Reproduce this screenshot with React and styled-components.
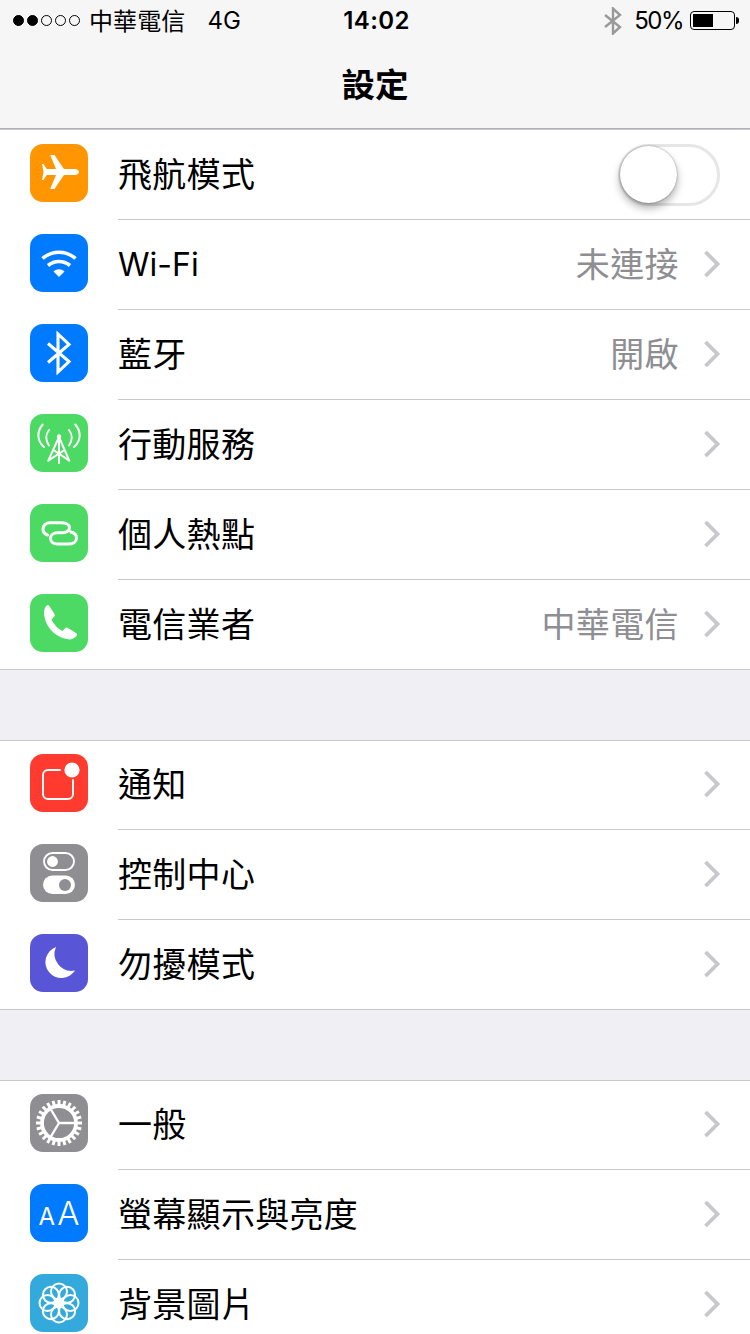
import React from "react";
import styled, { createGlobalStyle } from "styled-components";

const GlobalStyle = createGlobalStyle`
  html, body {
    margin: 0;
    height: 1334px;
    overflow: hidden;
    background: #efeff4;
  }
  body {
    font-family: Inter, "Noto Sans CJK TC", "Liberation Sans", sans-serif;
  }
`;

const Page = styled.div`
  width: 750px;
  height: 1334px;
  overflow: hidden;
  background: #efeff4;
`;

const Header = styled.header`
  height: 130px;
  box-sizing: border-box;
  background: #f6f6f7;
  border-bottom: 1px solid #c8c7cc;
  box-shadow: inset 0 -1px 0 #b2b2b8;
`;

const StatusBar = styled.div`
  height: 41px;
  padding: 0 11px 0 13px;
  display: grid;
  grid-template-columns: 1fr auto 1fr;
  align-items: center;
  color: #000;
  font-size: 24px;
`;

const StatusLeft = styled.div`
  display: flex;
  align-items: center;
`;

const Dots = styled.div`
  display: flex;
  gap: 3px;
  margin-right: 9px;
`;

const Dot = styled.span`
  width: 11px;
  height: 11px;
  box-sizing: border-box;
  border-radius: 50%;
  border: 1px solid #000;
  background: ${(p) => (p.$on ? "#000" : "transparent")};
`;

const Carrier = styled.span`
  padding-bottom: 2px;
  letter-spacing: 0.1px;
`;

const Network = styled.span`
  margin-left: 22px;
  margin-right: -2px;
`;

const Clock = styled.span`
  font-weight: 600;
  letter-spacing: 0.4px;
  margin-left: 1px;
`;

const StatusRight = styled.div`
  display: flex;
  align-items: center;
  justify-content: flex-end;
`;

const BluetoothMark = styled.svg`
  margin-right: 11px;
`;

const Percent = styled.span`
  letter-spacing: -1.5px;
`;

const Battery = styled.div`
  width: 45px;
  height: 19px;
  margin-left: 7px;
  margin-right: 4px;
  box-sizing: border-box;
  border: 1px solid #000;
  border-radius: 4px;
  padding: 2px;
  display: flex;
  position: relative;
  &::after {
    content: "";
    position: absolute;
    right: -5px;
    top: 5px;
    width: 3px;
    height: 7px;
    background: #000;
    border-radius: 0 3px 3px 0;
  }
`;

const BatteryLevel = styled.div`
  width: 50%;
  background: #000;
`;

const Title = styled.h1`
  margin: 0;
  height: 83px;
  display: flex;
  align-items: center;
  justify-content: center;
  font-size: 33.500px;
  font-weight: 600;
  color: #000;
`;

const Section = styled.section`
  background: #fff;
  margin-bottom: 70px;
  box-shadow: ${(p) => (p.$flush ? "" : "inset 0 1px 0 #c8c7cc,")} inset 0 -1px 0 #c8c7cc;
`;

const Row = styled.div`
  height: 90px;
  padding-left: 30px;
  display: flex;
  align-items: flex-start;
  gap: 30px;
`;

const IconBox = styled.div`
  flex: none;
  width: 58px;
  height: 58px;
  margin-top: 14px;
  border-radius: 13px;
  background: ${(p) => p.$color};
  display: flex;
  align-items: center;
  justify-content: center;
  color: #fff;
`;

const RowBody = styled.div`
  flex: 1;
  height: 90px;
  box-sizing: border-box;
  padding-right: 29px;
  display: flex;
  align-items: center;
  border-bottom: 1px solid ${(p) => (p.$last ? "transparent" : "#c8c7cc")};
`;

const Label = styled.span`
  flex: 1;
  font-size: ${(p) => (p.$latin ? "32px" : "34px")};
  letter-spacing: ${(p) => (p.$latin ? "0" : "0.3px")};
  padding-bottom: ${(p) => (p.$latin ? "0" : "4px")};
  color: #000;
`;

const Value = styled.span`
  font-size: 34px;
  letter-spacing: 0.4px;
  padding-bottom: 4px;
  color: #8e8e93;
  margin-right: 25px;
`;

const Track = styled.div`
  width: 102px;
  height: 62px;
  margin-right: 1px;
  box-sizing: border-box;
  border: 3px solid #e6e6e6;
  border-radius: 31px;
  display: flex;
  align-items: center;
`;

const Knob = styled.div`
  width: 57px;
  height: 57px;
  margin-left: -1px;
  border-radius: 50%;
  background: #fff;
  box-shadow: 0 5px 9px rgba(0, 0, 0, 0.32), 0 0 2px rgba(0, 0, 0, 0.4);
`;

const ChevronMark = styled.svg`
  margin-bottom: 1px;
`;

const AaGlyphs = styled.div`
  display: flex;
  align-items: baseline;
  gap: 2px;
  font-family: Inter, "Liberation Sans", sans-serif;
`;

const AaSmall = styled.span`
  font-size: 24px;
  font-weight: 400;
`;

const AaLarge = styled.span`
  font-size: 33px;
  font-weight: 300;
`;

const Svg = ({ children }) => (
  <svg width="58" height="58" viewBox="0 0 58 58" fill="none" stroke="#fff" strokeLinecap="round" strokeLinejoin="round">
    {children}
  </svg>
);

const Plane = () => (
  <Svg>
    <path
      stroke="none"
      fill="#fff"
      d="M49 28c0-1.600-2-3-4-3H34L24.500 11h-4.300l5.800 14h-9.200L13.400 20H12l1.500 8L12 36h1.400l3.400-5H26L20.200 45h4.300L34 31h11c2 0 4-1.400 4-3z"
    />
  </Svg>
);

const Wifi = () => (
  <Svg>
    <path strokeWidth="3.600" strokeLinecap="butt" d="M12.500 24.500c9.500-8.400 23.500-8.400 33 0" />
    <path strokeWidth="3.600" strokeLinecap="butt" d="M18 31.500c6.500-5.400 15.500-5.400 22 0" />
    <path stroke="none" fill="#fff" d="M23.500 37.500c3.200-3 7.800-3 11 0L29 43z" />
  </Svg>
);

const Bluetooth = () => (
  <Svg>
    <path strokeWidth="3.100" strokeLinecap="butt" strokeLinejoin="miter" d="M18 19.500 39 37.500 28 48V10l11 10.500L18 38.500" />
  </Svg>
);

const Tower = () => (
  <Svg>
    <g strokeWidth="2">
      <path d="M12.700 10.500c-6 7-6 16 1.300 22.500" />
      <path d="M45.300 10.500c6 7 6 16-1.300 22.500" />
      <path d="M19 16c-3.600 4.500-3.600 10.500 0 15.500" />
      <path d="M39 16c3.600 4.500 3.600 10.500 0 15.500" />
      <path d="M29 23v26M29 23 18.300 46.700M29 23l10.300 23.700M23.400 36 39.300 46.700M34.600 36 18.300 46.700" />
    </g>
    <circle cx="29" cy="22.500" r="2.200" fill="#fff" stroke="none" />
  </Svg>
);

const Hotspot = () => (
  <Svg>
    <path
      strokeWidth="3"
      d="M17.500 31C14.500 30 13 27.800 13 25 13 21.500 16 18.800 20 18.800H31C35.500 18.800 39.500 20.500 39.500 23.700 39.500 26.800 36 28.800 32 28.800H27.500C23.500 28.800 20.500 31 20.500 34.500 20.500 37.800 23.500 40 27.500 40H38.500C43 40 46.500 37.800 46.500 34 46.500 31 44.500 28.800 41 28"
    />
  </Svg>
);

const Phone = () => (
  <Svg>
    <path
      stroke="none"
      fill="#fff"
      d="M19 11.500l5.500 8.500c.6 1 .4 2-.4 2.800l-2.600 2.600c2 4.500 6.500 9.500 11 11.500l2.600-2.600c.8-.8 1.800-1 2.800-.4l8.500 5.400c.8.6.8 1.600.2 2.400-1.500 2-4.400 3.700-7 3.700C24 44 14 31 14 18c0-2.400 1.400-5.400 3-6.800.6-.4 1.400-.3 2 .3z"
    />
  </Svg>
);

const Bell = () => (
  <Svg>
    <path strokeWidth="1.900" d="M30 16H18a5 5 0 0 0-5 5v19a5 5 0 0 0 5 5h20a5 5 0 0 0 5-5V26" />
    <circle cx="42" cy="16" r="7.600" fill="#fff" stroke="none" />
  </Svg>
);

const Toggles = () => (
  <Svg>
    <rect x="14" y="9" width="30" height="17" rx="8.500" strokeWidth="1.900" />
    <circle cx="22.500" cy="17.500" r="5.400" fill="#fff" stroke="none" />
    <rect x="13" y="31.500" width="32" height="18.500" rx="9.250" fill="#fff" stroke="none" />
    <circle cx="35" cy="41" r="6" fill="#8e8e93" stroke="none" />
  </Svg>
);

const Moon = () => (
  <Svg>
    <path stroke="none" fill="#fff" d="M26 13a16 16 0 1 0 19 23.500A17 17 0 0 1 26 13z" />
  </Svg>
);

const Gear = () => (
  <Svg>
    <circle cx="29" cy="29" r="17" strokeWidth="3.800" />
    {Array.from({ length: 24 }, (_, i) => (
      <path key={i} strokeWidth="3" strokeLinecap="butt" d="M29 6V12" transform={`rotate(${i * 15} 29 29)`} />
    ))}
    <path strokeWidth="2.400" strokeLinecap="butt" d="M29 29 20 14M29 29h17M29 29l-9 15" />
  </Svg>
);

const Flower = () => (
  <Svg>
    {Array.from({ length: 8 }, (_, i) => (
      <circle key={i} cx="29" cy="17.500" r="8" strokeWidth="2" transform={`rotate(${i * 45} 29 29)`} />
    ))}
    <circle cx="29" cy="29" r="3.200" fill="#fff" stroke="none" />
  </Svg>
);

const Aa = () => (
  <AaGlyphs>
    <AaSmall>A</AaSmall>
    <AaLarge>A</AaLarge>
  </AaGlyphs>
);

const Chevron = () => (
  <ChevronMark width="17" height="28" viewBox="0 0 17 28" fill="none" stroke="#c7c7cc" strokeWidth="3.800">
    <path d="M1.500 2 13.500 14 1.500 26" />
  </ChevronMark>
);

const SECTIONS = [
  {
    flush: true,
    rows: [
      { icon: <Plane />, color: "#ff9500", label: "飛航模式", toggle: true },
      { icon: <Wifi />, color: "#007aff", label: "Wi-Fi", value: "未連接", latin: true },
      { icon: <Bluetooth />, color: "#007aff", label: "藍牙", value: "開啟" },
      { icon: <Tower />, color: "#4cd964", label: "行動服務" },
      { icon: <Hotspot />, color: "#4cd964", label: "個人熱點" },
      { icon: <Phone />, color: "#4cd964", label: "電信業者", value: "中華電信" },
    ],
  },
  {
    rows: [
      { icon: <Bell />, color: "#ff3b30", label: "通知" },
      { icon: <Toggles />, color: "#8e8e93", label: "控制中心" },
      { icon: <Moon />, color: "#5856d6", label: "勿擾模式" },
    ],
  },
  {
    rows: [
      { icon: <Gear />, color: "#8e8e93", label: "一般" },
      { icon: <Aa />, color: "#007aff", label: "螢幕顯示與亮度" },
      { icon: <Flower />, color: "#34aadc", label: "背景圖片" },
    ],
  },
];

export default function App() {
  return (
    <Page>
      <GlobalStyle />
      <Header>
        <StatusBar>
          <StatusLeft>
            <Dots>
              {[true, true, false, false, false].map((on, i) => (
                <Dot key={i} $on={on} />
              ))}
            </Dots>
            <Carrier>中華電信</Carrier>
            <Network>4G</Network>
          </StatusLeft>
          <Clock>14:02</Clock>
          <StatusRight>
            <BluetoothMark width="20" height="28" viewBox="0 0 20 28" fill="none" stroke="#999" strokeWidth="2.400">
              <path d="M2 8 17 20 10 26.500V1.500l7 6.500L2 20" />
            </BluetoothMark>
            <Percent>50%</Percent>
            <Battery>
              <BatteryLevel />
            </Battery>
          </StatusRight>
        </StatusBar>
        <Title>設定</Title>
      </Header>
      {SECTIONS.map((section, s) => (
        <Section key={s} $flush={section.flush}>
          {section.rows.map((row, i) => (
            <Row key={row.label}>
              <IconBox $color={row.color}>{row.icon}</IconBox>
              <RowBody $last={i === section.rows.length - 1}>
                <Label $latin={row.latin}>{row.label}</Label>
                {row.value && <Value>{row.value}</Value>}
                {row.toggle ? (
                  <Track>
                    <Knob />
                  </Track>
                ) : (
                  <Chevron />
                )}
              </RowBody>
            </Row>
          ))}
        </Section>
      ))}
    </Page>
  );
}
